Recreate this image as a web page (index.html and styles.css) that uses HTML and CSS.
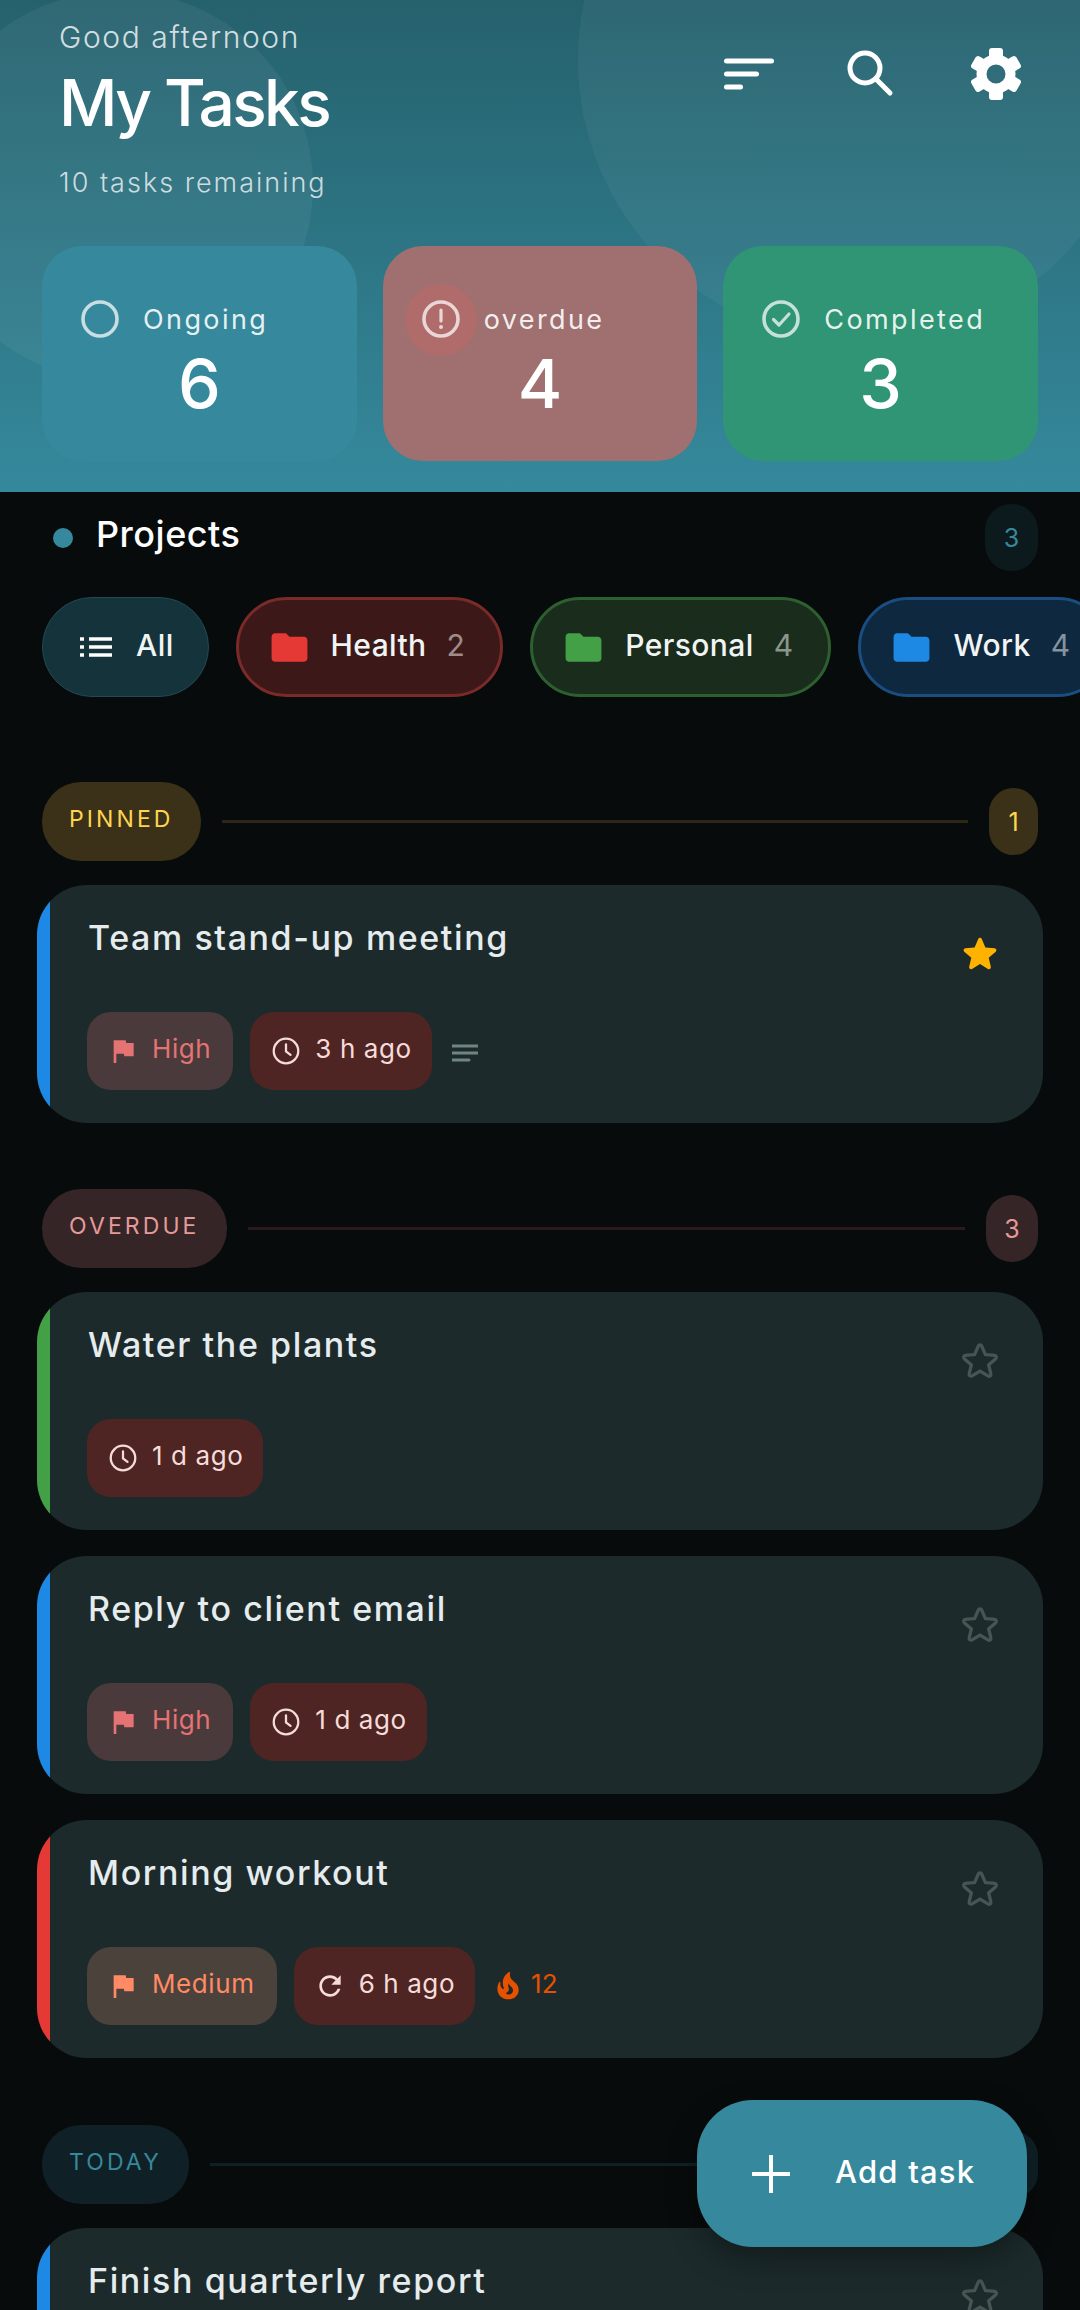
FILE: index.html
```html
<!DOCTYPE html>
<html lang="en">
<head>
    <meta charset="UTF-8">
    <meta name="viewport" content="width=device-width, initial-scale=1.0">
    <title>My Tasks</title>
    <link rel="stylesheet" href="styles.css">
</head>
<body>
    <svg class="defs" width="0" height="0">
        <symbol id="star" viewBox="0 0 24 24"><path d="M12 17.27l4.15 2.51c.76.46 1.69-.22 1.49-1.08l-1.1-4.72 3.67-3.18c.67-.58.31-1.68-.57-1.75l-4.83-.41-1.89-4.46c-.34-.81-1.5-.81-1.84 0L9.19 8.63l-4.83.41c-.88.07-1.24 1.17-.57 1.75l3.67 3.18-1.1 4.72c-.2.86.73 1.54 1.49 1.08l4.15-2.5z"/></symbol>
        <symbol id="flag" viewBox="0 0 24 24"><path d="M14.4 6L14 4H5v17h2v-7h5.6l.4 2h7V6z"/></symbol>
        <symbol id="clock" viewBox="0 0 24 24"><circle cx="12" cy="12" r="9.2" fill="none" stroke="currentColor" stroke-width="1.7"/><path d="M12 7v5.3l3.4 2.6" fill="none" stroke="currentColor" stroke-width="1.7" stroke-linecap="round"/></symbol>
        <symbol id="folder" viewBox="0 0 24 24"><path d="M10 4H4c-1.1 0-2 .9-2 2v12c0 1.1.9 2 2 2h16c1.1 0 2-.9 2-2V8c0-1.1-.9-2-2-2h-8l-2-2z"/></symbol>
    </svg>

    <header class="hero">
        <div class="blob blob-left"></div>
        <div class="blob blob-right"></div>
        <div class="hero-top">
            <div class="hero-text">
                <p class="greeting">Good afternoon</p>
                <h1>My Tasks</h1>
                <p class="remaining">10 tasks remaining</p>
            </div>
            <div class="hero-icons">
                <svg viewBox="0 0 64 64"><path d="M8.500 19h45M8.500 32h30M8.500 45h14" stroke="#fff" stroke-width="5" stroke-linecap="round" fill="none"/></svg>
                <svg viewBox="0 0 64 64"><circle cx="24" cy="26" r="15" stroke="#fff" stroke-width="5" fill="none"/><path d="M35 37l14 14" stroke="#fff" stroke-width="5" stroke-linecap="round"/></svg>
                <svg viewBox="0 0 64 64" fill="#fff">
                    <circle cx="32" cy="32" r="14.500" fill="none" stroke="#fff" stroke-width="10"/>
                    <rect x="25" y="6" width="14" height="12" rx="3"/>
                    <rect x="25" y="6" width="14" height="12" rx="3" transform="rotate(60 32 32)"/>
                    <rect x="25" y="6" width="14" height="12" rx="3" transform="rotate(120 32 32)"/>
                    <rect x="25" y="6" width="14" height="12" rx="3" transform="rotate(180 32 32)"/>
                    <rect x="25" y="6" width="14" height="12" rx="3" transform="rotate(240 32 32)"/>
                    <rect x="25" y="6" width="14" height="12" rx="3" transform="rotate(300 32 32)"/>
                </svg>
            </div>
        </div>
        <div class="stats">
            <div class="stat stat-ongoing">
                <div class="stat-label">
                    <svg class="stat-icon" viewBox="0 0 38 38"><circle cx="19" cy="19" r="17" fill="none" stroke="currentColor" stroke-width="3.600"/></svg>
                    <span>Ongoing</span>
                </div>
                <div class="stat-num">6</div>
            </div>
            <div class="stat stat-overdue">
                <div class="stat-label">
                    <span class="halo"></span>
                    <svg class="stat-icon" viewBox="0 0 38 38"><circle cx="19" cy="19" r="17" fill="none" stroke="currentColor" stroke-width="3.600"/><path d="M19 10v11" stroke="currentColor" stroke-width="3.200" stroke-linecap="round"/><circle cx="19" cy="27" r="2" fill="currentColor"/></svg>
                    <span>overdue</span>
                </div>
                <div class="stat-num">4</div>
            </div>
            <div class="stat stat-done">
                <div class="stat-label">
                    <svg class="stat-icon" viewBox="0 0 38 38"><circle cx="19" cy="19" r="17" fill="none" stroke="currentColor" stroke-width="3.600"/><path d="M11.500 19.500l5.500 5.500 10-11" fill="none" stroke="currentColor" stroke-width="3.200" stroke-linecap="round" stroke-linejoin="round"/></svg>
                    <span>Completed</span>
                </div>
                <div class="stat-num">3</div>
            </div>
        </div>
    </header>

    <main class="content">
        <div class="projects-head">
            <span class="dot"></span>
            <h2>Projects</h2>
            <span class="count count-teal">3</span>
        </div>

        <div class="chips">
            <div class="chip chip-all">
                <svg class="list-icon" viewBox="0 0 32 24"><path d="M9 4h23M9 12h23M9 20h23" stroke="#fff" stroke-width="3.400" fill="none"/><path d="M0 4h4M0 12h4M0 20h4" stroke="#fff" stroke-width="3.400" fill="none"/></svg>
                <span>All</span>
            </div>
            <div class="chip chip-health">
                <svg class="folder"><use href="#folder"/></svg>
                <span>Health</span><span class="chip-num">2</span>
            </div>
            <div class="chip chip-personal">
                <svg class="folder"><use href="#folder"/></svg>
                <span>Personal</span><span class="chip-num">4</span>
            </div>
            <div class="chip chip-work">
                <svg class="folder"><use href="#folder"/></svg>
                <span>Work</span><span class="chip-num">4</span>
            </div>
        </div>

        <section class="group group-first group-pinned">
            <div class="group-head">
                <span class="pill">PINNED</span>
                <span class="line"></span>
                <span class="count">1</span>
            </div>
            <article class="task bar-blue">
                <div class="task-body">
                    <h3>Team stand-up meeting</h3>
                    <div class="tags">
                        <span class="tag tag-high"><svg class="tag-icon"><use href="#flag"/></svg>High</span>
                        <span class="tag tag-late"><svg class="tag-icon"><use href="#clock"/></svg>3 h ago</span>
                        <svg class="note-icon" viewBox="0 0 26 18"><path d="M0 2h26M0 9h26M0 16h17" stroke="#6e8582" stroke-width="3" stroke-linecap="round"/></svg>
                    </div>
                </div>
                <svg class="star star-on"><use href="#star"/></svg>
            </article>
        </section>

        <section class="group group-overdue">
            <div class="group-head">
                <span class="pill">OVERDUE</span>
                <span class="line"></span>
                <span class="count">3</span>
            </div>
            <article class="task bar-green">
                <div class="task-body">
                    <h3>Water the plants</h3>
                    <div class="tags">
                        <span class="tag tag-late"><svg class="tag-icon"><use href="#clock"/></svg>1 d ago</span>
                    </div>
                </div>
                <svg class="star"><use href="#star"/></svg>
            </article>
            <article class="task bar-blue">
                <div class="task-body">
                    <h3>Reply to client email</h3>
                    <div class="tags">
                        <span class="tag tag-high"><svg class="tag-icon"><use href="#flag"/></svg>High</span>
                        <span class="tag tag-late"><svg class="tag-icon"><use href="#clock"/></svg>1 d ago</span>
                    </div>
                </div>
                <svg class="star"><use href="#star"/></svg>
            </article>
            <article class="task bar-red">
                <div class="task-body">
                    <h3>Morning workout</h3>
                    <div class="tags">
                        <span class="tag tag-medium"><svg class="tag-icon"><use href="#flag"/></svg>Medium</span>
                        <span class="tag tag-late"><svg class="tag-icon" viewBox="0 0 24 24"><path d="M17.650 6.350C16.200 4.900 14.210 4 12 4c-4.420 0-7.990 3.580-7.990 8s3.570 8 7.990 8c3.730 0 6.840-2.550 7.730-6h-2.080c-.82 2.330-3.040 4-5.650 4-3.310 0-6-2.690-6-6s2.690-6 6-6c1.660 0 3.140.69 4.220 1.780L13 11h7V4l-2.350 2.350z" fill="currentColor"/></svg>6 h ago</span>
                        <span class="streak"><svg class="tag-icon" viewBox="0 0 24 24"><path d="M19.480 12.350c-1.570-4.080-7.160-4.300-5.810-10.230.1-.44-.37-.78-.75-.55C9.290 3.710 6.680 8 8.870 13.620c.18.46-.36.89-.75.59-1.810-1.370-2-3.340-1.840-4.750.06-.52-.62-.77-.91-.34C4.690 10.160 4 11.840 4 14.370c.38 5.600 5.110 7.320 6.810 7.540 2.430.31 5.060-.14 6.950-1.870 2.080-1.930 2.840-5.010 1.720-7.690zm-9.280 5.030c1.440-.35 2.180-1.390 2.380-2.310.33-1.430-.96-2.830-.09-5.090.33 1.870 3.270 3.040 3.270 5.080.08 2.530-2.660 4.700-5.560 2.320z" fill="currentColor"/></svg>12</span>
                    </div>
                </div>
                <svg class="star"><use href="#star"/></svg>
            </article>
        </section>

        <section class="group group-today">
            <div class="group-head">
                <span class="pill">TODAY</span>
                <span class="line"></span>
                <span class="count">6</span>
            </div>
            <article class="task bar-blue">
                <div class="task-body">
                    <h3>Finish quarterly report</h3>
                </div>
                <svg class="star"><use href="#star"/></svg>
            </article>
        </section>
    </main>

    <button class="fab" type="button">
        <svg viewBox="0 0 38 38"><path d="M19 1v36M1 19h36" stroke="#fff" stroke-width="4" stroke-linecap="round"/></svg>
        <span>Add task</span>
    </button>
</body>
</html>
```
FILE: styles.css
```css
* {
    box-sizing: border-box;
}

html, body {
    height: 2310px;
    margin: 0;
    overflow: hidden;
}

body {
    position: relative;
    width: 1080px;
    font-family: Inter, "Noto Sans", sans-serif;
    background-color: #080b0b;
    color: #fff;
}

.defs {
    position: absolute;
}

/* header */

.hero {
    position: relative;
    height: 492px;
    padding: 17px 42px 0;
    overflow: hidden;
    background: linear-gradient(180deg, #25616d 0%, #35899c 100%);
}

.blob {
    position: absolute;
    border-radius: 50%;
}

.blob-left {
    left: -77px;
    top: -9px;
    width: 390px;
    height: 390px;
    background-color: rgba(255, 255, 255, 0.05);
}

.blob-right {
    left: 578px;
    top: -222px;
    width: 564px;
    height: 564px;
    background-color: rgba(255, 255, 255, 0.045);
}

.hero-top {
    position: relative;
    display: flex;
    justify-content: space-between;
}

.hero-text {
    padding-left: 17px;
}

.greeting {
    margin: 0;
    font-size: 30px;
    line-height: 40px;
    font-weight: 300;
    letter-spacing: 1.600px;
    color: rgba(255, 255, 255, 0.8);
}

.hero-text h1 {
    margin: 6px 0 0;
    font-size: 64px;
    line-height: 80px;
    font-weight: 500;
    letter-spacing: -2.600px;
}

.remaining {
    margin: 20px 0 0;
    font-size: 27px;
    line-height: 40px;
    font-weight: 300;
    letter-spacing: 2px;
    color: rgba(255, 255, 255, 0.75);
}

.hero-icons {
    display: flex;
    gap: 59px;
    margin: 25px 10px 0 0;
}

.hero-icons svg {
    width: 64px;
    height: 64px;
}

.stats {
    position: relative;
    display: flex;
    gap: 26px;
    margin-top: 43px;
}

.stat {
    flex: 1;
    height: 215px;
    padding: 55px 0 0 39px;
    border-radius: 40px;
}

.stat-ongoing {
    background-color: #36889c;
}

.stat-overdue {
    background-color: #a07070;
}

.stat-done {
    background-color: #2f9574;
}

.stat-label {
    position: relative;
    display: flex;
    align-items: center;
    gap: 24px;
    height: 38px;
    padding-bottom: 2px;
    font-size: 27px;
    letter-spacing: 2.400px;
    color: rgba(255, 255, 255, 0.9);
}

.stat-icon {
    position: relative;
    flex: none;
    width: 38px;
    height: 38px;
    color: rgba(255, 255, 255, 0.72);
}

.halo {
    position: absolute;
    left: -17px;
    top: -17px;
    width: 72px;
    height: 72px;
    border-radius: 50%;
    background-color: rgba(229, 90, 90, 0.24);
}

.stat-num {
    margin: 4px 0 0 -39px;
    font-size: 68px;
    line-height: 80px;
    font-weight: 500;
    text-align: center;
}

/* projects */

.content {
    padding: 12px 42px 0;
}

.projects-head {
    display: flex;
    align-items: center;
    height: 67px;
}

.dot {
    width: 20px;
    height: 20px;
    margin: 1px 23px 0 11px;
    border-radius: 50%;
    background-color: #36889c;
}

.projects-head h2 {
    flex: 1;
    margin: 0 0 8px;
    font-size: 36px;
    font-weight: 500;
    letter-spacing: 0.5px;
}

.count {
    display: flex;
    align-items: center;
    justify-content: center;
    flex: none;
    height: 67px;
    min-width: 49px;
    padding: 0 17px;
    border-radius: 26px;
    font-size: 25px;
}

.count-teal {
    min-width: 53px;
    background-color: #0c1a1e;
    color: #36889c;
}

.chips {
    display: flex;
    gap: 27px;
    margin: 26px -42px 0 0;
    overflow: hidden;
}

.chip {
    display: flex;
    align-items: center;
    flex: none;
    height: 100px;
    padding: 0 35px 4px 29px;
    border: 3px solid;
    border-radius: 50px;
    font-size: 30px;
    font-weight: 500;
    letter-spacing: 0.4px;
    color: #f1f4f4;
}

.chip-all {
    padding: 0 34px 4px 37px;
    border-width: 1px;
    border-color: #204a54;
    background-color: #15333a;
}

.chip-health {
    border-color: #7a2a28;
    background-color: #3c1918;
    fill: #e53935;
}

.chip-personal {
    border-color: #2d6030;
    background-color: #1a2c1b;
    fill: #43a047;
}

.chip-work {
    border-color: #1a4d80;
    background-color: #0e2840;
    fill: #1e88e5;
}

.list-icon {
    width: 32px;
    height: 24px;
    margin: 4px 24px 0 0;
}

.folder {
    width: 43px;
    height: 43px;
    margin: 4px 20px 0 0;
}

.chip-num {
    margin-left: 20px;
    font-weight: 400;
    color: rgba(255, 255, 255, 0.5);
}

/* task groups */

.group {
    margin-top: 67px;
}

.group-first {
    margin-top: 85px;
}

.group-overdue {
    margin-top: 66px;
}

.group-head {
    display: flex;
    align-items: center;
    height: 79px;
    margin-bottom: 24px;
}

.pill {
    flex: none;
    height: 79px;
    padding: 0 27px;
    border-radius: 39px;
    font-size: 23px;
    line-height: 75px;
    letter-spacing: 3.100px;
}

.line {
    flex: 1;
    height: 3px;
    margin: 0 21px;
}

.group-pinned .pill,
.group-pinned .count {
    background-color: #3a3118;
    color: #ffd54f;
}

.group-pinned .line {
    background-color: #2c2715;
}

.group-overdue .pill,
.group-overdue .count {
    min-width: 52px;
    background-color: #352526;
    color: #e49a99;
}

.group-overdue .line {
    background-color: #2a1a1b;
}

.group-today .pill,
.group-today .count {
    background-color: #0f2126;
    color: #36889c;
}

.group-today .line {
    background-color: #0f2024;
}

.task {
    display: flex;
    justify-content: space-between;
    height: 238px;
    margin: 26px -5px 0;
    padding: 31px 40px 0 50px;
    border-radius: 50px;
    background: linear-gradient(90deg, var(--bar) 13px, #1c2a2b 13px);
}

.group-head + .task {
    margin-top: 0;
}

.bar-blue {
    --bar: #1e88e5;
}

.bar-green {
    --bar: #43a047;
}

.bar-red {
    --bar: #e53935;
}

.task h3 {
    margin: 0 0 0 1px;
    font-size: 34px;
    line-height: 44px;
    font-weight: 450;
    letter-spacing: 1.600px;
    color: #e6eced;
}

.tags {
    display: flex;
    align-items: center;
    gap: 17px;
    margin-top: 52px;
}

.tag {
    display: flex;
    align-items: center;
    gap: 13px;
    height: 78px;
    padding: 0 22px 6px 20px;
    border-radius: 24px;
    font-size: 26px;
    letter-spacing: 0.600px;
}

.tag-late {
    padding-right: 20px;
}

.tag-icon {
    flex: none;
    width: 32px;
    height: 32px;
    margin-top: 6px;
    fill: currentColor;
}

.tag-high {
    background-color: #4a3a3c;
    color: #e57373;
}

.tag-medium {
    background-color: #4b423c;
    color: #ff8a65;
}

.tag-late {
    background-color: #4f2524;
    color: #f6dcd9;
}

.note-icon {
    width: 26px;
    height: 18px;
    margin: 4px 0 0 3px;
}

.streak {
    display: flex;
    align-items: center;
    gap: 7px;
    padding-bottom: 6px;
    font-size: 26px;
    color: #e65100;
}

.star {
    flex: none;
    width: 46px;
    height: 46px;
    margin-top: 15px;
    fill: none;
    stroke: #465654;
    stroke-width: 1.700;
}

.star-on {
    fill: #ffb300;
    stroke: none;
}

/* add button */

.fab {
    position: absolute;
    left: 697px;
    top: 2100px;
    display: flex;
    align-items: center;
    gap: 45px;
    width: 330px;
    height: 147px;
    padding: 0 0 4px 55px;
    border: none;
    border-radius: 56px;
    background-color: #36889c;
    box-shadow: 0 12px 30px rgba(0, 0, 0, 0.35);
    color: #fff;
    font-family: inherit;
    font-size: 31px;
    font-weight: 500;
    letter-spacing: 1.200px;
}

.fab svg {
    width: 38px;
    height: 38px;
    margin-top: 4px;
}
```
